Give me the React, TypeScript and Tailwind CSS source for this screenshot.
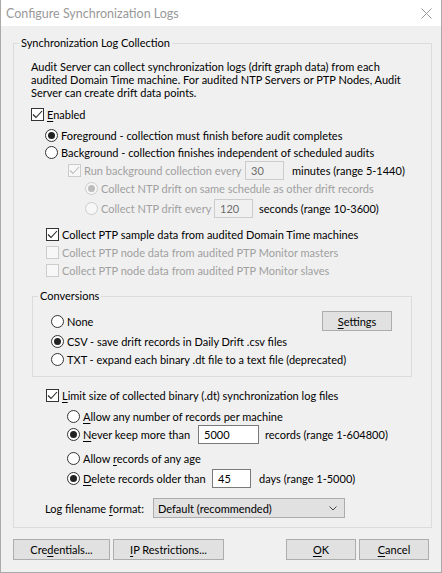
import { ReactNode } from "react";

const U = ({ children }: { children: ReactNode }) => (
  <span className="underline underline-offset-[2px] decoration-[1px]">{children}</span>
);

const Check = ({ checked, disabled }: { checked?: boolean; disabled?: boolean }) => (
  <span
    className={`flex h-[13px] w-[13px] shrink-0 items-center justify-center border ${
      disabled ? "border-[#cccccc] bg-[#f7f7f7]" : "border-[#333333] bg-white"
    }`}
  >
    {checked && (
      <svg width="11" height="11" viewBox="0 0 11 11">
        <path
          d="M1 5.5 L4 8.5 L10 2"
          fill="none"
          stroke={disabled ? "#bcbcbc" : "#222222"}
          strokeWidth="1.1"
        />
      </svg>
    )}
  </span>
);

const Radio = ({ checked, disabled }: { checked?: boolean; disabled?: boolean }) => (
  <span
    className={`flex h-[13px] w-[13px] shrink-0 items-center justify-center rounded-full border ${
      disabled ? "border-[#cccccc] bg-[#f7f7f7]" : "border-[#333333] bg-white"
    }`}
  >
    {checked && (
      <span
        className={`h-[7px] w-[7px] rounded-full ${disabled ? "bg-[#bcbcbc]" : "bg-[#222222]"}`}
      />
    )}
  </span>
);

const TextBox = ({
  value,
  width,
  disabled,
}: {
  value: string;
  width: string;
  disabled?: boolean;
}) => (
  <span
    className={`flex h-[19px] shrink-0 items-center border pl-[5px] ${width} ${
      disabled
        ? "border-[#cccccc] bg-[#f0f0f0] text-[#6d6d6d]"
        : "border-[#7a7a7a] bg-white text-black"
    }`}
  >
    {value}
  </span>
);

const Btn = ({ children, width }: { children: ReactNode; width: string }) => (
  <button
    className={`flex h-[21px] items-center justify-center border border-[#adadad] bg-[#e1e1e1] ${width}`}
  >
    {children}
  </button>
);

export default function App() {
  return (
    <div className="flex h-[573px] w-[442px] flex-col whitespace-nowrap border-x border-b border-[#aaaaaa] bg-[#f0f0f0] font-['Lato',sans-serif] text-[11px] leading-[13px] text-black">
      {/* title bar */}
      <div className="flex h-[26px] shrink-0 items-center justify-between bg-white pl-[5px] pr-[9px]">
        <span className="text-[12.5px] text-[#999999]">Configure Synchronization Logs</span>
        <svg width="11" height="11" viewBox="0 0 11 11">
          <path d="M0.5 0.5 L10.5 10.5 M10.5 0.5 L0.5 10.5" stroke="#999999" strokeWidth="1" />
        </svg>
      </div>

      <fieldset className="ml-[12px] mt-[9px] w-[419px] border border-[#dcdcdc] pb-[9px]">
        <legend className="ml-[5px] px-[2px] leading-[16px]">Synchronization Log Collection</legend>

        <p className="ml-[17px] mt-[9px]">
          Audit Server can collect synchronization logs (drift graph data) from each
          <br />
          audited Domain Time machine. For audited NTP Servers or PTP Nodes, Audit
          <br />
          Server can create drift data points.
        </p>

        <div className="ml-[17px] mt-[7px] flex h-[16px] items-center gap-[3px]">
          <Check checked />
          <span>
            <U>E</U>nabled
          </span>
        </div>

        <div className="ml-[31px] mt-[5px] flex h-[16px] items-center gap-[3px]">
          <Radio checked />
          <span>Foreground - collection must finish before audit completes</span>
        </div>
        <div className="ml-[31px] mt-[1px] flex h-[16px] items-center gap-[3px]">
          <Radio />
          <span>Background - collection finishes independent of scheduled audits</span>
        </div>

        <div className="ml-[54px] flex h-[20px] items-center">
          <div className="flex w-[177px] shrink-0 items-center gap-[3px] text-[#a0a0a0]">
            <Check checked disabled />
            <span>Run background collection every</span>
          </div>
          <TextBox value="30" width="w-[39px]" disabled />
          <span className="ml-[8px]">minutes (range 5-1440)</span>
        </div>

        <div className="ml-[71px] flex h-[16px] items-center gap-[3px] text-[#a0a0a0]">
          <Radio checked disabled />
          <span>Collect NTP drift on same schedule as other drift records</span>
        </div>
        <div className="ml-[71px] mt-[3px] flex h-[18px] items-center">
          <div className="flex w-[129px] shrink-0 items-center gap-[3px] text-[#a0a0a0]">
            <Radio disabled />
            <span>Collect NTP drift every</span>
          </div>
          <TextBox value="120" width="w-[39px]" disabled />
          <span className="ml-[6px]">seconds (range 10-3600)</span>
        </div>

        <div className="ml-[32px] mt-[9px] flex h-[16px] items-center gap-[3px]">
          <Check checked />
          <span>Collect PTP sample data from audited Domain Time machines</span>
        </div>
        <div className="ml-[32px] mt-[2px] flex h-[16px] items-center gap-[3px] text-[#a0a0a0]">
          <Check disabled />
          <span>Collect PTP node data from audited PTP Monitor masters</span>
        </div>
        <div className="ml-[32px] mt-[2px] flex h-[16px] items-center gap-[3px] text-[#a0a0a0]">
          <Check disabled />
          <span>Collect PTP node data from audited PTP Monitor slaves</span>
        </div>

        <fieldset className="ml-[18px] mt-[10px] w-[380px] border border-[#dcdcdc] pb-[9px]">
          <legend className="ml-[5px] px-[2px] leading-[16px]">Conversions</legend>
          <div className="mt-[7px] flex h-[20px] items-center justify-between pl-[18px] pr-[19px]">
            <div className="flex items-center gap-[3px]">
              <Radio />
              <span>None</span>
            </div>
            <button className="flex h-[20px] w-[70px] items-center justify-center border border-[#adadad] bg-[#e1e1e1]">
              <span>
                <U>S</U>ettings
              </span>
            </button>
          </div>
          <div className="ml-[18px] mt-[2px] flex h-[16px] items-center gap-[3px]">
            <Radio checked />
            <span>CSV - save drift records in Daily Drift .csv files</span>
          </div>
          <div className="ml-[18px] mt-[2px] flex h-[16px] items-center gap-[3px]">
            <Radio />
            <span>TXT - expand each binary .dt file to a text file (deprecated)</span>
          </div>
        </fieldset>

        <div className="ml-[32px] mt-[10px] flex h-[16px] items-center gap-[3px]">
          <Check checked />
          <span>
            <U>L</U>imit size of collected binary (.dt) synchronization log files
          </span>
        </div>

        <div className="ml-[53px] mt-[5px] flex h-[16px] items-center gap-[3px]">
          <Radio />
          <span>
            <U>A</U>llow any number of records per machine
          </span>
        </div>
        <div className="ml-[53px] flex h-[20px] items-center">
          <div className="flex w-[131px] shrink-0 items-center gap-[3px]">
            <Radio checked />
            <span>
              <U>N</U>ever keep more than
            </span>
          </div>
          <TextBox value="5000" width="w-[61px]" />
          <span className="ml-[6px]">records (range 1-604800)</span>
        </div>

        <div className="ml-[53px] mt-[6px] flex h-[16px] items-center gap-[3px]">
          <Radio />
          <span>
            Allow <U>r</U>ecords of any age
          </span>
        </div>
        <div className="ml-[53px] mt-[2px] flex h-[20px] items-center">
          <div className="flex w-[145px] shrink-0 items-center gap-[3px]">
            <Radio checked />
            <span>
              <U>D</U>elete records older than
            </span>
          </div>
          <TextBox value="45" width="w-[39px]" />
          <span className="ml-[8px]">days (range 1-5000)</span>
        </div>

        <div className="ml-[31px] mt-[10px] flex h-[20px] items-center">
          <span className="w-[108px] shrink-0">
            Log filename <U>f</U>ormat:
          </span>
          <div className="flex h-[20px] w-[192px] items-center justify-between border border-[#acacac] bg-[#e1e1e1] pl-[4px] pr-[7px]">
            <span>Default (recommended)</span>
            <svg width="8" height="5" viewBox="0 0 8 5">
              <path d="M0.5 0.5 L4 4 L7.5 0.5" fill="none" stroke="#444444" strokeWidth="1" />
            </svg>
          </div>
        </div>
      </fieldset>

      <div className="ml-[12px] mt-[11px] flex w-[416px] items-center">
        <Btn width="w-[97px]">
          <span>
            Cre<U>d</U>entials...
          </span>
        </Btn>
        <div className="ml-[3px]">
          <Btn width="w-[111px]">
            <span>
              <U>I</U>P Restrictions...
            </span>
          </Btn>
        </div>
        <div className="ml-auto flex gap-[3px]">
          <Btn width="w-[70px]">
            <span>
              <U>O</U>K
            </span>
          </Btn>
          <Btn width="w-[70px]">
            <span>
              <U>C</U>ancel
            </span>
          </Btn>
        </div>
      </div>
    </div>
  );
}
